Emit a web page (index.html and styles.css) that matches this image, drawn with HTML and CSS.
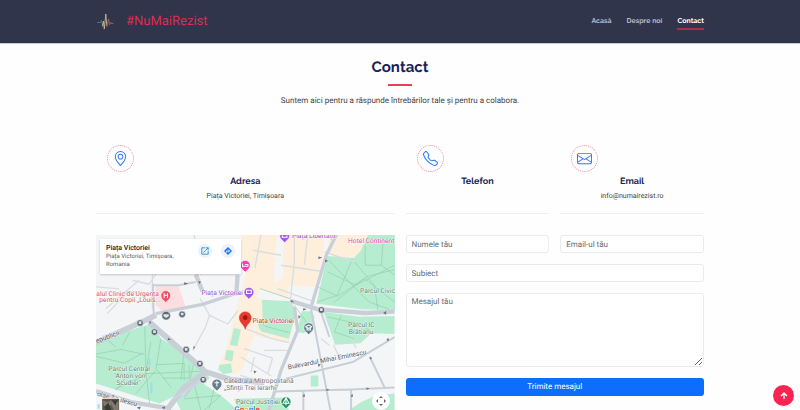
FILE: index.html
```html
<!DOCTYPE html>
<html lang="ro">
<head>
<meta charset="utf-8">
<meta name="viewport" content="width=device-width, initial-scale=1">
<title>Contact - #NuMaiRezist</title>
<link rel="stylesheet" href="styles.css">
</head>
<body>
<header class="header">
  <div class="container header-row">
    <a class="brand" href="#">
      <svg class="brand-logo" viewBox="0 0 18 20" aria-hidden="true">
        <g fill="none" stroke-linecap="round" stroke-linejoin="round" stroke-width=".9">
          <path d="M1.500 10.500h3l1-2 1 5 1-2" stroke="#54788c"/>
          <path d="M6.500 14l1-5 .8 8L9.800 2l1 12" stroke="#c5b98f"/>
          <path d="M10.800 14l1.700-7 1 6 1-3 .8 1.500H17" stroke="#a0645d"/>
        </g>
      </svg>
      <span>#NuMaiRezist</span>
    </a>
    <nav class="nav">
      <a href="#">Acasă</a>
      <a href="#">Despre noi</a>
      <a class="active" href="#" aria-current="page">Contact</a>
    </nav>
  </div>
</header>

<main class="container">
  <div class="section-title">
    <h1>Contact</h1>
    <p>Suntem aici pentru a răspunde întrebărilor tale și pentru a colabora.</p>
  </div>

  <div class="columns info">
    <section class="card">
      <span class="card-icon">
        <svg viewBox="0 0 16 16" aria-hidden="true"><path d="M12.166 8.94c-.524 1.062-1.234 2.12-1.96 3.07A32 32 0 0 1 8 14.58a32 32 0 0 1-2.206-2.57c-.726-.95-1.436-2.008-1.96-3.07C3.304 7.867 3 6.862 3 6a5 5 0 0 1 10 0c0 .862-.305 1.867-.834 2.94M8 16s6-5.686 6-10A6 6 0 0 0 2 6c0 4.314 6 10 6 10"/><path d="M8 8a2 2 0 1 1 0-4 2 2 0 0 1 0 4m0 1a3 3 0 1 0 0-6 3 3 0 0 0 0 6"/></svg>
      </span>
      <h2>Adresa</h2>
      <p>Piața Victoriei, Timișoara</p>
    </section>
    <div class="pair">
      <section class="card">
        <span class="card-icon">
          <svg viewBox="0 0 16 16" aria-hidden="true"><path d="M3.654 1.328a.678.678 0 0 0-1.015-.063L1.605 2.3c-.483.484-.661 1.169-.45 1.77a17.6 17.6 0 0 0 4.168 6.608 17.6 17.6 0 0 0 6.608 4.168c.601.211 1.286.033 1.77-.45l1.034-1.034a.678.678 0 0 0-.063-1.015l-2.307-1.794a.68.68 0 0 0-.58-.122l-2.19.547a1.75 1.75 0 0 1-1.657-.459L5.482 8.062a1.75 1.75 0 0 1-.46-1.657l.548-2.19a.68.68 0 0 0-.122-.58zM1.884.511a1.745 1.745 0 0 1 2.612.163L6.29 2.98c.329.423.445.974.315 1.494l-.547 2.19a.68.68 0 0 0 .178.643l2.457 2.457a.68.68 0 0 0 .644.178l2.189-.547a1.75 1.75 0 0 1 1.494.315l2.306 1.794c.829.645.905 1.87.163 2.611l-1.034 1.034c-.74.74-1.846 1.065-2.877.702a18.6 18.6 0 0 1-7.01-4.42 18.6 18.6 0 0 1-4.42-7.009c-.362-1.03-.037-2.137.703-2.877z"/></svg>
        </span>
        <h2>Telefon</h2>
      </section>
      <section class="card">
        <span class="card-icon">
          <svg viewBox="0 0 16 16" aria-hidden="true"><path d="M0 4a2 2 0 0 1 2-2h12a2 2 0 0 1 2 2v8a2 2 0 0 1-2 2H2a2 2 0 0 1-2-2zm2-1a1 1 0 0 0-1 1v.217l7 4.2 7-4.2V4a1 1 0 0 0-1-1zm13 2.383-4.708 2.825L15 11.105zm-.034 6.876-5.64-3.471L8 9.583l-1.326-.795-5.64 3.47A1 1 0 0 0 2 13h12a1 1 0 0 0 .966-.741M1 11.105l4.708-2.897L1 5.383z"/></svg>
        </span>
        <h2>Email</h2>
        <p>info@numairezist.ro</p>
      </section>
    </div>
  </div>

  <div class="columns">
    <div class="map">
      <svg class="map-canvas" viewBox="6 9 894 525" preserveAspectRatio="xMidYMid slice" role="img" aria-label="Piața Victoriei">
        <rect width="910" height="540" fill="#f4f5f7"/>
        <!-- commercial areas -->
        <g fill="#fdefdb">
          <path d="M440 9h110l-12 70 62 10v56l-20 28 5 32-85-35-15 30-6 112-34 100-20 14-55-20 25-50 30-120 30-110-15-40z"/>
          <path d="M560 9h130l-6 76-24 80-74-6V92l-26-6zM706 9h115v32l-30 32-72 5-21-20z"/>
          <path d="M480 195l120 32-15 105-100-20z"/>
        </g>
        <path d="M555 9h12v76h-12zM540 85h28v50l-24 22-4-10z" fill="#f4f5f7"/>
        <path d="M184 160h68l23 65-70 13-21-20z" fill="#fcdedf"/>
        <!-- parks -->
        <g fill="#b6eccf">
          <path d="M698 72l80 6 20-20 16-35 8-14h80v225l-100-2-136-17z"/>
          <path d="M6 328l150-48h20l25 40 65 38 70 60 10 22-150 74-190-60z"/>
          <path d="M235 485l84-40 16 15 50 34 45 40H260z"/>
          <path d="M503 203l85 5 18 28-22 84-85-22-8-20 14-20z"/>
          <path d="M419 287l21 6-11 50-22-4zM397 353l22 4-5 31-23-5zM376 398l34-4 4 28-26 4-16-14z"/>
          <path d="M622 238h26l12 14-4 34-28 18-20-5zM688 240l106 14 106-2v54l-70-2-32 30-76 4z"/>
          <path d="M649 430h23v33h-23zM764 534l36-24 40-18 60-8v50z"/>
          <path d="M420 500l142-4 22 38H430z"/>
        </g>
        <path d="M812 42v58h48" fill="none" stroke="#8fcdab" stroke-width="2"/>
        <!-- park paths -->
        <g fill="none" stroke="#90cfad" stroke-width="2">
          <path d="M704 85l70 75 50 50 60 22M670 165l60 28 90-60 80-20M774 80l-45 110-60 20M780 90l60 70 10 74M700 120l84 40 116-60M720 210l90-70 90 70M866 20l-5 80 39 30"/>
          <path d="M152 285l4 140 12 100M6 366l75-14 70 15M6 373l85 20 55-30M25 310l40 35M107 300l-22 40M100 430l-34 45M170 330l-16 100-90 40M200 320l-14 90 45 56M154 425l184-8M185 398l85-4v50M270 358l-10 85M205 438h80v-38M185 415l-60 70M300 388l-14 60"/>
          <path d="M497 170l90 30M510 282l75 20M600 220l50 70M700 255l100 22 34 25M740 250l-20 50 60 20M300 455l20 79M270 500l110-10-50 44M360 470l-15 60"/>
        </g>
        <g stroke="#9adff0" stroke-width="6"><path d="M166 380v22M172 450v34M14 516v14"/></g>
        <!-- minor streets -->
        <g fill="none" stroke="#d9dde2" stroke-width="4">
          <path d="M115 145l50 12 20-30M175 127v105M130 180h-30l-60 65M35 230l100-85M6 165l70 6M300 9l20 120M475 55l85 15M500 9l-18 100M600 9v80l-14 140M560 100l120 18M550 170l110 40M640 9l-10 90M690 60l90 30"/>
          <path d="M318 200l28 50-12 35-38 70M346 250l55 26 30-40M450 288l82 32 52 12M450 350l85 28M440 375l90 56M480 375l-10 45M535 378l-15 48M438 430l70 20M510 355h70M680 320l25 20M770 320l15 28M718 340l14 30"/>
        </g>
        <!-- main roads -->
        <g fill="none" stroke="#c9cfd7" stroke-linejoin="round">
          <path stroke-width="17" d="M320 415l90 28 100 8M6 332l150-68 30-15M165 270l165 145M338 418l-70 50-50 66"/>
          <path stroke-width="13" d="M6 477l110 34 100 16M430 130l-4 60M305 128l20 50M590 207l82 25 140 11 88-4"/>
          <path stroke-width="10" d="M726 9l-30 60-44 150M600 225l10 70-50 120-36 119M185 245l140-28 105-34"/>
          <path stroke-width="6" d="M650 230l58 304M680 240l25 75M540 478l230-6 130-6M575 440l200-50 125-75M174 160h80l50-10M176 155l3 100M627 478v56M770 473v61M826 374l46 96M330 418l-60 78"/>
        </g>
        <path d="M230 505l110-70" stroke="#d8cfeb" stroke-width="5"/>
        <g fill="#69737e">
          <path d="M270 151l12 4-12 4zM672 74l12 3-12 4zM693 82l8 5-9 5zM590 203l10 8-11-1zM626 229l11 2-10 5zM612 250l7 3-6 8zM165 267l7 4-5 5zM222 317l9 6-10 2zM298 342l5 3-5 8zM312 147l8 2-4 8zM875 237v11l-9-5zM478 415l9 3-7 6zM624 493l6-8 2 9zM696 470l10 3-10 4zM768 493l6-8 2 9zM816 466l10 3-10 4zM825 375l8 2-5 6zM875 325l6-8 3 9zM128 526l12-3-3 9zM203 526l11-4-4 9zM670 395l9 2-6 8z"/>
        </g>
        <!-- transit stops -->
        <g class="stops">
          <circle cx="216" cy="251" r="13"/><circle cx="264" cy="247" r="10"/><circle cx="138" cy="273" r="10"/><circle cx="181" cy="300" r="10"/><circle cx="276" cy="353" r="10"/><circle cx="317" cy="395" r="10"/><circle cx="327" cy="443" r="10"/><circle cx="681" cy="234" r="10"/>
        </g>
        <path d="M208 247h16v6l-8 5-8-5zM260 242h8v8h-8zM134 268h8v8h-8zM177 295h8v8h-8zM272 348h8v8h-8zM313 390h8v8h-8zM323 438h8v8h-8zM677 229h8v8h-8z" fill="#dfe4e8"/>
        <!-- places -->
        <g stroke="#fff" stroke-width="2">
          <path fill="#f13fb5" d="M453 121l-8-8a15 15 0 1 1 16 0z"/>
          <path fill="#a35be9" d="M464 202l-9-9a15 15 0 1 1 18 0zM571 33l-9-9a15 15 0 1 1 18 0z"/>
          <path fill="#ea5268" d="M215 212l-9-9a15 15 0 1 1 18 0z"/>
          <path fill="#66818e" d="M643 308l-9-9a15 15 0 1 1 18 0zM368 477l-9-9a15 15 0 1 1 18 0z"/>
          <path fill="#1d9560" d="M575 530l-9-9a15 15 0 1 1 18 0z"/>
        </g>
        <g fill="none" stroke="#fff" stroke-width="3">
          <path d="M210 183v15M220 183v15M210 190h10M445 95v11M445 103h16v-5h-9M368 446v17M361 452h14M634 284l9-5 9 5-9 5zM638 288v6h10v-6M575 496v23M566 513l9-16 9 16zM457 175h14v10h-14zM564 11v5h14v-5"/>
        </g>
        <path d="M453 292c-3-15-18-20-18-35a18 18 0 0 1 36 0c0 15-15 20-18 35z" fill="#e8392d" stroke="#c72c23"/>
        <circle cx="453" cy="257" r="7" fill="#9b1913"/>
        <g class="map-label">
          <text class="purple" x="593" y="18">Piața Libertății</text>
          <text class="pink" x="761" y="33">Hotel Continent</text>
          <text class="purple" x="322" y="188">Piața Victoriei</text>
          <text class="red" x="7" y="191">alul Clinic de Urgența</text>
          <text class="red" x="16" y="211">pentru Copii „Louis...</text>
          <text class="crimson" x="475" y="272">Piața Victoriei</text>
          <text class="green" x="797" y="182">Parcul Civic</text>
          <text class="green" x="761" y="286">Parcul IC</text>
          <text class="green" x="763" y="306">Brătianu</text>
          <text class="green" x="43" y="416">Parcul Central</text>
          <text class="green" x="59" y="437">"Anton von</text>
          <text class="green" x="67" y="458">Scudier"</text>
          <text class="grey" x="389" y="454">Catedrala Mitropolitană</text>
          <text class="grey" x="389" y="475">„Sfinții Trei Ierarhi"</text>
          <text class="green" x="425" y="516">Parcul Justiției</text>
          <text class="road" x="8" y="334" transform="rotate(-21 8 334)">epublicii</text>
          <text class="road" x="8" y="491" transform="rotate(15 8 491)">olae Titulescu</text>
          <text class="road" x="582" y="412" transform="rotate(-11 582 412)">Bulevardul Mihai Eminescu</text>
        </g>
        <path d="M23 498h54v42H23z" fill="#5b564f" stroke="#fff" stroke-width="3"/>
        <path d="M26 505l15 5 9-6 12 9 12-6v28H60l-9-18-12 12-9-7z" fill="#80786e"/>
        <path d="M31 523l12-11 9 22H35zM53 502l10 4 8-4-7 18z" fill="#383b32"/>
        <text class="map-logo" x="420" y="540"><tspan fill="#4285f4">G</tspan><tspan fill="#ea4335">o</tspan><tspan fill="#fbbc05">o</tspan><tspan fill="#4285f4">g</tspan><tspan fill="#34a853">l</tspan><tspan fill="#ea4335">e</tspan></text>
      </svg>
      <div class="place">
        <div class="place-text">
          <strong>Piața Victoriei</strong>
          <p>Piața Victoriei, Timișoara, Romania</p>
        </div>
        <a class="round" href="#" aria-label="Deschide harta"><svg viewBox="0 0 10 10" aria-hidden="true"><path d="M5 1H1v8h8V5M6 1h3v3M9 1L3 7" fill="none" stroke="#1a80d8"/></svg></a>
        <a class="round" href="#" aria-label="Indicații"><svg viewBox="0 0 10 10" aria-hidden="true"><path d="M5 0l5 5-5 5-5-5z" fill="#1a73e8"/><path d="M3 7V5h4M5 3l2 2-2 2" fill="none" stroke="#fff"/></svg></a>
      </div>
      <button class="camera" type="button" aria-label="Comenzi hartă"><svg viewBox="0 0 12 12" aria-hidden="true"><path d="M4 3l2-2 2 2zM4 9l2 2 2-2zM3 4L1 6l2 2zM9 4l2 2-2 2z" fill="#666"/></svg></button>
    </div>

    <form class="form">
      <div class="pair">
        <input type="text" placeholder="Numele tău" aria-label="Numele tău">
        <input type="email" placeholder="Email-ul tău" aria-label="Email-ul tău">
      </div>
      <input type="text" placeholder="Subiect" aria-label="Subiect">
      <textarea placeholder="Mesajul tău" aria-label="Mesajul tău"></textarea>
      <button class="submit" type="submit">Trimite mesajul</button>
    </form>
  </div>
</main>

<a class="to-top" href="#" aria-label="Înapoi sus"><svg viewBox="0 0 8 8" aria-hidden="true"><path d="M4 7V1M1 4l3-3 3 3" fill="none" stroke="#fff" stroke-width="1.300"/></svg></a>
</body>
</html>
```
FILE: styles.css
```css
* {
  box-sizing: border-box;
}

body {
  margin: 0;
  min-height: 100vh;
  overflow: hidden;
  background: #fefefe;
  color: #444;
  font: 8px/12px Roboto, sans-serif;
  text-rendering: geometricPrecision;
}

h1, h2, p {
  margin: 0;
}

a {
  color: inherit;
  text-decoration: none;
}

.container {
  width: 76%;
  margin: 0 auto;
}

.header {
  background: #30354b;
  border-bottom: 1px solid #c9cad3;
}

.header-row {
  display: flex;
  align-items: center;
  justify-content: space-between;
  height: 43px;
}

.brand {
  display: flex;
  align-items: center;
  gap: 12px;
  color: #df2c51;
  font-size: 13px;
}

.brand-logo {
  width: 18px;
  height: 20px;
}

.nav {
  display: flex;
  gap: 15px;
  color: #b8bac6;
  font: bold 7px/14px Raleway, Lato, sans-serif;
}

.nav a {
  border-bottom: 2px solid transparent;
}

.nav .active {
  color: #fff;
  border-color: #b02b4b;
}

.section-title {
  padding: 13px 0 27px;
  text-align: center;
}

.section-title h1 {
  color: #191f57;
  font: bold 15px/20px Raleway, Lato, sans-serif;
}

.section-title h1::after {
  content: "";
  display: block;
  width: 24px;
  height: 2px;
  margin: 7px auto 9px;
  background: #e83f59;
}

.columns,
.pair {
  display: grid;
  grid-template-columns: 1fr 1fr;
  gap: 11px;
}

.info {
  margin-bottom: 21px;
}

.card {
  min-height: 80px;
  padding: 11px 11px 9px;
  text-align: center;
  border-bottom: 1px solid #f0f0f1;
}

.card-icon {
  display: flex;
  align-items: center;
  justify-content: center;
  width: 27px;
  height: 27px;
  border: 1px dotted #f0899b;
  border-radius: 50%;
}

.card-icon svg {
  width: 15px;
  height: 15px;
  fill: #2b7af5;
}

.card h2 {
  margin: 4px 0 2px;
  color: #191f57;
  font: bold 9px/12px Raleway, Lato, sans-serif;
}

.card p {
  font-size: 7px;
}

.map {
  position: relative;
  height: 175px;
  overflow: hidden;
}

.map-canvas {
  display: block;
  width: 100%;
  height: 100%;
}

.stops {
  fill: #5e6875;
  stroke: #e7eaee;
  stroke-width: 2px;
}

.map-label {
  font-size: 20px;
  stroke: #fff;
  stroke-width: 3px;
  stroke-opacity: 0.7;
  paint-order: stroke;
}

.purple { fill: #8d50d3; }
.pink { fill: #e94aa9; }
.red { fill: #dd5363; }
.crimson { fill: #c9352e; }
.green { fill: #5b8572; }
.grey { fill: #6c7780; }
.road { fill: #4f5864; }

.map-logo {
  font-size: 24px;
  font-weight: bold;
  stroke: #fff;
  stroke-width: 3px;
  paint-order: stroke;
}

.place {
  position: absolute;
  top: 4px;
  left: 4px;
  display: flex;
  gap: 9px;
  width: 141px;
  height: 35px;
  padding: 5px 6px;
  background: #fff;
  box-shadow: 0 1px 2px #0003;
}

.place-text {
  flex: 1;
  color: #5b5b5b;
  font-size: 6px;
  line-height: 8px;
}

.place strong {
  display: block;
  color: #222;
  font-size: 7px;
  font-weight: 500;
  line-height: 9px;
}

.round {
  display: flex;
  align-items: center;
  justify-content: center;
  width: 14px;
  height: 14px;
  border-radius: 50%;
  background: #edf2f7;
}

.round svg {
  width: 8px;
  height: 8px;
}

.camera {
  position: absolute;
  right: 5px;
  bottom: 0;
  display: grid;
  place-items: center;
  width: 18px;
  height: 18px;
  padding: 0;
  border: 0;
  border-radius: 50%;
  background: #fff;
}

.camera svg {
  width: 12px;
  height: 12px;
}

.form {
  display: flex;
  flex-direction: column;
  gap: 11px;
}

.form input,
.form textarea {
  width: 100%;
  height: 18px;
  padding: 2px 5px;
  border: 1px solid #e9ebed;
  border-radius: 3px;
  background: #fff;
  color: #333;
  font: inherit;
  text-rendering: inherit;
}

.form textarea {
  display: block;
  height: 74px;
  resize: vertical;
}

.form ::placeholder {
  color: #666b70;
  opacity: 1;
}

.submit {
  height: 18px;
  padding: 0;
  border: 0;
  border-radius: 3px;
  background: #0d6efd;
  color: #fff;
  font: inherit;
  text-rendering: inherit;
}

.to-top {
  position: fixed;
  right: 6px;
  bottom: 4px;
  display: grid;
  place-items: center;
  width: 21px;
  height: 21px;
  border-radius: 50%;
  background: #fb2450;
}

.to-top svg {
  width: 8px;
  height: 8px;
}
```
